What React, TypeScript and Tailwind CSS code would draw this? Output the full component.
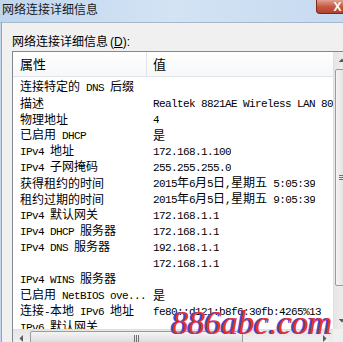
import React from "react";

const CJK = /([\u2E80-\u9FFF\uFF00-\uFFEF]+)/;

// SimSun-like mix: CJK at 12px, ASCII half width (6px)
function Txt({ s }: { s: string }) {
  return (
    <>
      {s
        .split(CJK)
        .filter(Boolean)
        .map((part, i) =>
          CJK.test(part) ? (
            <span key={i} className="font-['Noto_Sans_CJK_SC',sans-serif] text-[12px]">
              {part}
            </span>
          ) : (
            <span key={i} className="font-['Liberation_Mono',monospace] text-[11px] tracking-[-0.6px]">
              {part}
            </span>
          )
        )}
    </>
  );
}

const rows: [string, string][] = [
  ["连接特定的 DNS 后缀", ""],
  ["描述", "Realtek 8821AE Wireless LAN 802.11ac PCI-E NIC"],
  ["物理地址", "4"],
  ["已启用 DHCP", "是"],
  ["IPv4 地址", "172.168.1.100"],
  ["IPv4 子网掩码", "255.255.255.0"],
  ["获得租约的时间", "2015年6月5日,星期五 5:05:39"],
  ["租约过期的时间", "2015年6月5日,星期五 9:05:39"],
  ["IPv4 默认网关", "172.168.1.1"],
  ["IPv4 DHCP 服务器", "172.168.1.1"],
  ["IPv4 DNS 服务器", "192.168.1.1"],
  ["", "172.168.1.1"],
  ["IPv4 WINS 服务器", ""],
  ["已启用 NetBIOS ove...", "是"],
  ["连接-本地 IPv6 地址", "fe80::d121:b8f6:30fb:4265%13"],
  ["IPv6 默认网关", ""],
  ["", ""],
];

function Arrow({ dir }: { dir: "up" | "down" | "left" | "right" }) {
  const pts = {
    up: "5,10 8.5,6.5 12,10",
    down: "5,7 8.5,10.5 12,7",
    left: "10,5 6.5,8.5 10,12",
    right: "7,5 10.5,8.5 7,12",
  }[dir];
  return (
    <svg width="17" height="17" viewBox="0 0 17 17">
      <polygon points={pts} fill="#5a5a5a" />
    </svg>
  );
}

export default function App() {
  return (
    <div className="relative w-[343px] h-[342px] overflow-hidden flex flex-col bg-[#f0f0f0] text-black">
      {/* title bar */}
      <div className="h-[23px] shrink-0 flex items-start overflow-hidden border-b border-[#a9b8c9] bg-gradient-to-r from-[#c0d6ee] via-[#d3e3f4] to-[#c6daf0]">
        <span className="mt-[1px] ml-[2px] leading-[16px] font-['Noto_Sans_CJK_SC',sans-serif] text-[12px] text-[#1a1a1a]">
          网络连接详细信息
        </span>
        <div className="ml-auto -mr-[16px] w-[43px] h-[14px] rounded-bl-[4px] border border-t-0 border-[#7a2a1e] bg-gradient-to-b from-[#e1a08f] via-[#c65a43] to-[#b1412b] flex items-center justify-center">
          <span className="font-['Liberation_Sans',sans-serif] font-bold text-[12px] leading-none text-white">X</span>
        </div>
      </div>

      {/* body */}
      <div className="flex-1 flex border-l border-[#c5d6ea]">
        <div className="flex-1 flex flex-col border-l border-[#95a4b6] pl-[10px] pt-[10px]">
          <div className="leading-[16px] whitespace-pre flex items-baseline">
            <span className="font-['Noto_Sans_CJK_SC',sans-serif] text-[12px]">网络连接详细信息</span>
            <span className="ml-[2px] font-['Liberation_Sans',sans-serif] text-[12px]">
              (<span className="underline">D</span>):
            </span>
          </div>

          <div className="mt-[1px] w-[340px] h-[300px] border border-[#828790] bg-white grid grid-cols-[320px_17px] grid-rows-[277px_17px]">
            {/* content */}
            <div className="overflow-hidden flex flex-col">
              <div className="h-[25px] shrink-0 flex border-b border-[#e2e4e8] bg-gradient-to-b from-white to-[#f6f7f9]">
                <div className="w-[134px] border-r border-[#e2e4e8] pl-[7px] flex items-center">
                  <span className="font-['Noto_Sans_CJK_SC',sans-serif] text-[13px]">属性</span>
                </div>
                <div className="pl-[6px] flex items-center">
                  <span className="font-['Noto_Sans_CJK_SC',sans-serif] text-[13px]">值</span>
                </div>
              </div>
              <div className="pt-[1px]">
                {rows.map(([k, v], i) => (
                  <div key={i} className="h-[16px] flex items-center leading-[16px] whitespace-pre">
                    <div className="w-[134px] shrink-0 pl-[7px] overflow-hidden">
                      <Txt s={k} />
                    </div>
                    <div className="pl-[6px] overflow-hidden">
                      <Txt s={v} />
                    </div>
                  </div>
                ))}
              </div>
            </div>

            {/* vertical scrollbar */}
            <div className="flex flex-col bg-gradient-to-r from-[#e6e6e6] to-[#f2f2f2] border-l border-[#e0e0e0]">
              <div className="h-[17px] flex items-center justify-center">
                <Arrow dir="up" />
              </div>
              <div className="flex-1 flex flex-col">
                <div className="h-[217px] mx-[1px] rounded-[2px] border border-[#9c9c9c] bg-gradient-to-r from-[#f4f4f4] to-[#d9d9d9] flex items-center justify-center">
                  <div className="flex flex-col gap-[1px]">
                    <div className="w-[7px] h-[1px] bg-[#6f6f6f]" />
                    <div className="w-[7px] h-[1px] bg-[#6f6f6f]" />
                    <div className="w-[7px] h-[1px] bg-[#6f6f6f]" />
                  </div>
                </div>
              </div>
              <div className="h-[17px] flex items-center justify-center">
                <Arrow dir="down" />
              </div>
            </div>

            {/* horizontal scrollbar */}
            <div className="flex bg-gradient-to-b from-[#e6e6e6] to-[#f2f2f2] border-t border-[#e0e0e0]">
              <div className="w-[17px] flex items-center justify-center">
                <Arrow dir="left" />
              </div>
              <div className="flex-1 flex">
                <div className="w-[213px] my-[1px] rounded-[2px] border border-[#9c9c9c] bg-gradient-to-b from-[#f4f4f4] to-[#d9d9d9] flex items-center justify-center">
                  <div className="flex gap-[1px]">
                    <div className="w-[1px] h-[7px] bg-[#6f6f6f]" />
                    <div className="w-[1px] h-[7px] bg-[#6f6f6f]" />
                    <div className="w-[1px] h-[7px] bg-[#6f6f6f]" />
                  </div>
                </div>
              </div>
              <div className="w-[17px] flex items-center justify-center">
                <Arrow dir="right" />
              </div>
            </div>
            <div className="bg-[#f0f0f0]" />
          </div>
        </div>
      </div>

      {/* watermark */}
      <div className="absolute left-[172px] top-[307px] leading-none font-['Liberation_Serif',serif] italic text-[33px] text-[#e8322c] [text-shadow:-2px_0_0_#3d4fe0]">
        886abc.com
      </div>
    </div>
  );
}
